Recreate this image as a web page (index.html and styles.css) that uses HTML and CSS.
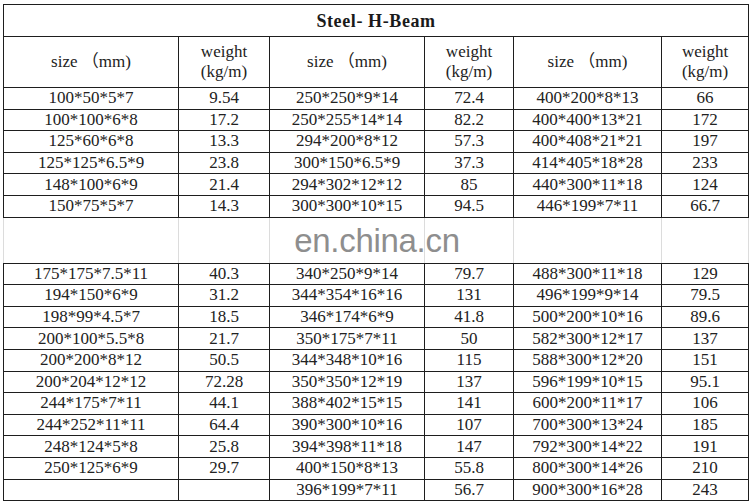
FILE: index.html
```html
<!DOCTYPE html>
<html>
<head>
<meta charset="utf-8">
<link rel="stylesheet" href="styles.css">
</head>
<body>
<div class="sheet">
  <table class="beam">
    <colgroup>
      <col class="c-size1"><col class="c-w1"><col class="c-size2"><col class="c-w2"><col class="c-size3"><col class="c-w3">
    </colgroup>
    <tr class="title-row"><td colspan="6">Steel- H-Beam</td></tr>
    <tr class="head-row">
      <td>size （mm)</td><td>weight<br>(kg/m)</td>
      <td>size （mm)</td><td>weight<br>(kg/m)</td>
      <td>size （mm)</td><td>weight<br>(kg/m)</td>
    </tr>
    <tr><td>100*50*5*7</td><td>9.54</td><td>250*250*9*14</td><td>72.4</td><td>400*200*8*13</td><td>66</td></tr>
    <tr><td>100*100*6*8</td><td>17.2</td><td>250*255*14*14</td><td>82.2</td><td>400*400*13*21</td><td>172</td></tr>
    <tr><td>125*60*6*8</td><td>13.3</td><td>294*200*8*12</td><td>57.3</td><td>400*408*21*21</td><td>197</td></tr>
    <tr><td>125*125*6.5*9</td><td>23.8</td><td>300*150*6.5*9</td><td>37.3</td><td>414*405*18*28</td><td>233</td></tr>
    <tr><td>148*100*6*9</td><td>21.4</td><td>294*302*12*12</td><td>85</td><td>440*300*11*18</td><td>124</td></tr>
    <tr><td>150*75*5*7</td><td>14.3</td><td>300*300*10*15</td><td>94.5</td><td>446*199*7*11</td><td>66.7</td></tr>
    <tr class="gap-row"><td></td><td></td><td></td><td></td><td></td><td></td></tr>
    <tr><td>175*175*7.5*11</td><td>40.3</td><td>340*250*9*14</td><td>79.7</td><td>488*300*11*18</td><td>129</td></tr>
    <tr><td>194*150*6*9</td><td>31.2</td><td>344*354*16*16</td><td>131</td><td>496*199*9*14</td><td>79.5</td></tr>
    <tr><td>198*99*4.5*7</td><td>18.5</td><td>346*174*6*9</td><td>41.8</td><td>500*200*10*16</td><td>89.6</td></tr>
    <tr><td>200*100*5.5*8</td><td>21.7</td><td>350*175*7*11</td><td>50</td><td>582*300*12*17</td><td>137</td></tr>
    <tr><td>200*200*8*12</td><td>50.5</td><td>344*348*10*16</td><td>115</td><td>588*300*12*20</td><td>151</td></tr>
    <tr><td>200*204*12*12</td><td>72.28</td><td>350*350*12*19</td><td>137</td><td>596*199*10*15</td><td>95.1</td></tr>
    <tr><td>244*175*7*11</td><td>44.1</td><td>388*402*15*15</td><td>141</td><td>600*200*11*17</td><td>106</td></tr>
    <tr><td>244*252*11*11</td><td>64.4</td><td>390*300*10*16</td><td>107</td><td>700*300*13*24</td><td>185</td></tr>
    <tr><td>248*124*5*8</td><td>25.8</td><td>394*398*11*18</td><td>147</td><td>792*300*14*22</td><td>191</td></tr>
    <tr><td>250*125*6*9</td><td>29.7</td><td>400*150*8*13</td><td>55.8</td><td>800*300*14*26</td><td>210</td></tr>
    <tr><td></td><td></td><td>396*199*7*11</td><td>56.7</td><td>900*300*16*28</td><td>243</td></tr>
  </table>
  <div class="watermark">en.china.cn</div>
</div>
</body>
</html>
```

FILE: styles.css
```css
html, body {
  margin: 0;
  padding: 0;
  background: #ffffff;
}

.sheet {
  position: relative;
  padding: 4px 0 0 3px;
  width: 752px;
  height: 503px;
  box-sizing: border-box;
  overflow: hidden;
}

.beam {
  border-collapse: collapse;
  table-layout: fixed;
  width: 745px;
  font-family: "Liberation Serif", "Noto Sans CJK SC", serif;
  font-size: 17px;
  color: #222222;
}

.c-size1 { width: 175px; }
.c-w1 { width: 91px; }
.c-size2 { width: 155px; }
.c-w2 { width: 89px; }
.c-size3 { width: 148px; }
.c-w3 { width: 87px; }

.beam td {
  border: 1px solid #1e1e1e;
  text-align: center;
  vertical-align: middle;
  padding: 0;
  height: 20.6px;
  line-height: 20px;
  white-space: nowrap;
}

.beam .title-row td {
  height: 31px;
  font-weight: bold;
  font-size: 18px;
  letter-spacing: 0.6px;
  color: #1a1a1a;
}

.beam .head-row td {
  height: 50px;
  line-height: 20px;
}

.beam .gap-row td {
  height: 45px;
  border-top-color: #1e1e1e;
  border-bottom-color: #1e1e1e;
  border-left-color: #dcdcdc;
  border-right-color: #dcdcdc;
}

.watermark {
  position: absolute;
  left: 0;
  right: 0;
  top: 220px;
  height: 42px;
  display: flex;
  align-items: center;
  justify-content: center;
  font-family: "Liberation Sans", Arial, sans-serif;
  font-size: 33px;
  color: #8e8e8e;
  letter-spacing: -0.3px;
  padding-left: 2px;
}
```
